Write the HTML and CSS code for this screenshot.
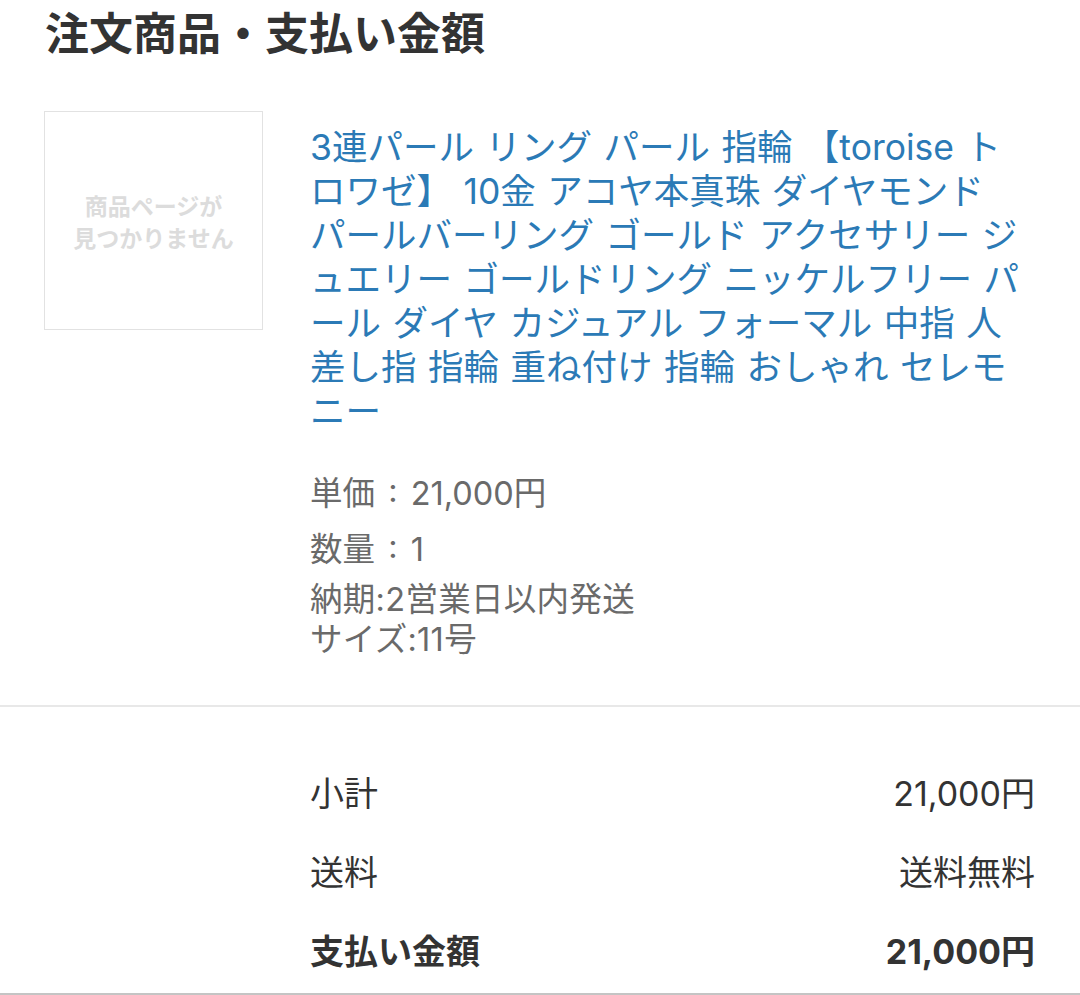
FILE: index.html
```html
<!DOCTYPE html>
<html lang="ja">
<head>
<meta charset="utf-8">
<link rel="stylesheet" href="styles.css">
</head>
<body>
<div class="page">
  <h1 class="heading">注文商品・支払い金額</h1>
  <div class="product">
    <div class="thumb">
      <span>商品ページが<br>見つかりません</span>
    </div>
    <div class="info">
      <a class="name">3連パール リング パール 指輪 【toroise ト<br>ロワゼ】 10金 アコヤ本真珠 ダイヤモンド<br>パールバーリング ゴールド アクセサリー ジ<br>ュエリー ゴールドリング ニッケルフリー パ<br>ール ダイヤ カジュアル フォーマル 中指 人<br>差し指 指輪 重ね付け 指輪 おしゃれ セレモ<br>ニー</a>
      <p class="meta price">単価 : 21,000円</p>
      <p class="meta qty">数量 : 1</p>
      <p class="meta opts">納期:2営業日以内発送<br>サイズ:11号</p>
    </div>
  </div>
</div>
<div class="summary">
  <div class="row"><span>小計</span><span>21,000円</span></div>
  <div class="row"><span>送料</span><span>送料無料</span></div>
  <div class="row total"><span>支払い金額</span><span>21,000円</span></div>
</div>
</body>
</html>
```
FILE: styles.css
```css
html, body {
  margin: 0;
  padding: 0;
  background: #fff;
}
body {
  font-family: Inter, "Noto Sans CJK JP", sans-serif;
  color: #333;
  width: 1080px;
  height: 995px;
  overflow: hidden;
}
.page {
  padding: 0 45px;
}
.heading {
  margin: 0;
  font-family: "Noto Sans CJK JP", sans-serif;
  font-size: 44px;
  font-weight: 700;
  line-height: 62px;
  color: #333;
}
.product {
  display: flex;
  align-items: flex-start;
  gap: 47px;
  margin-top: 49px;
  padding-bottom: 45px;
}
.thumb {
  box-sizing: border-box;
  flex: 0 0 219px;
  width: 219px;
  height: 219px;
  margin-left: -1px;
  border: 1px solid #e2e2e2;
  display: flex;
  align-items: center;
  justify-content: center;
  text-align: center;
}
.thumb span {
  font-family: "Noto Sans CJK JP", sans-serif;
  font-size: 23px;
  line-height: 32px;
  font-weight: 700;
  color: #dcdcdc;
}
.info {
  flex: 1;
  min-width: 0;
  padding-top: 15px;
}
.name {
  display: block;
  font-size: 35.5px;
  font-weight: 400;
  line-height: 44px;
  color: #2b7ab6;
  text-decoration: none;
  white-space: nowrap;
  word-spacing: 1.5px;
}
.meta {
  margin: 0;
  font-size: 32.5px;
  line-height: 44px;
  color: #6a6a6a;
  word-spacing: 4px;
}
.price {
  margin-top: 38px;
}
.qty {
  margin-top: 12px;
}
.opts {
  margin-top: 8px;
  line-height: 40px;
  letter-spacing: 0.3px;
}
.summary {
  border-top: 2px solid #e8e8e8;
  border-bottom: 2px solid #c4c4c4;
  padding: 45px 45px 4px 310px;
}
.row {
  display: flex;
  justify-content: space-between;
  align-items: center;
  height: 79px;
  font-size: 34px;
  color: #333;
}
.total {
  font-weight: 700;
}
```
